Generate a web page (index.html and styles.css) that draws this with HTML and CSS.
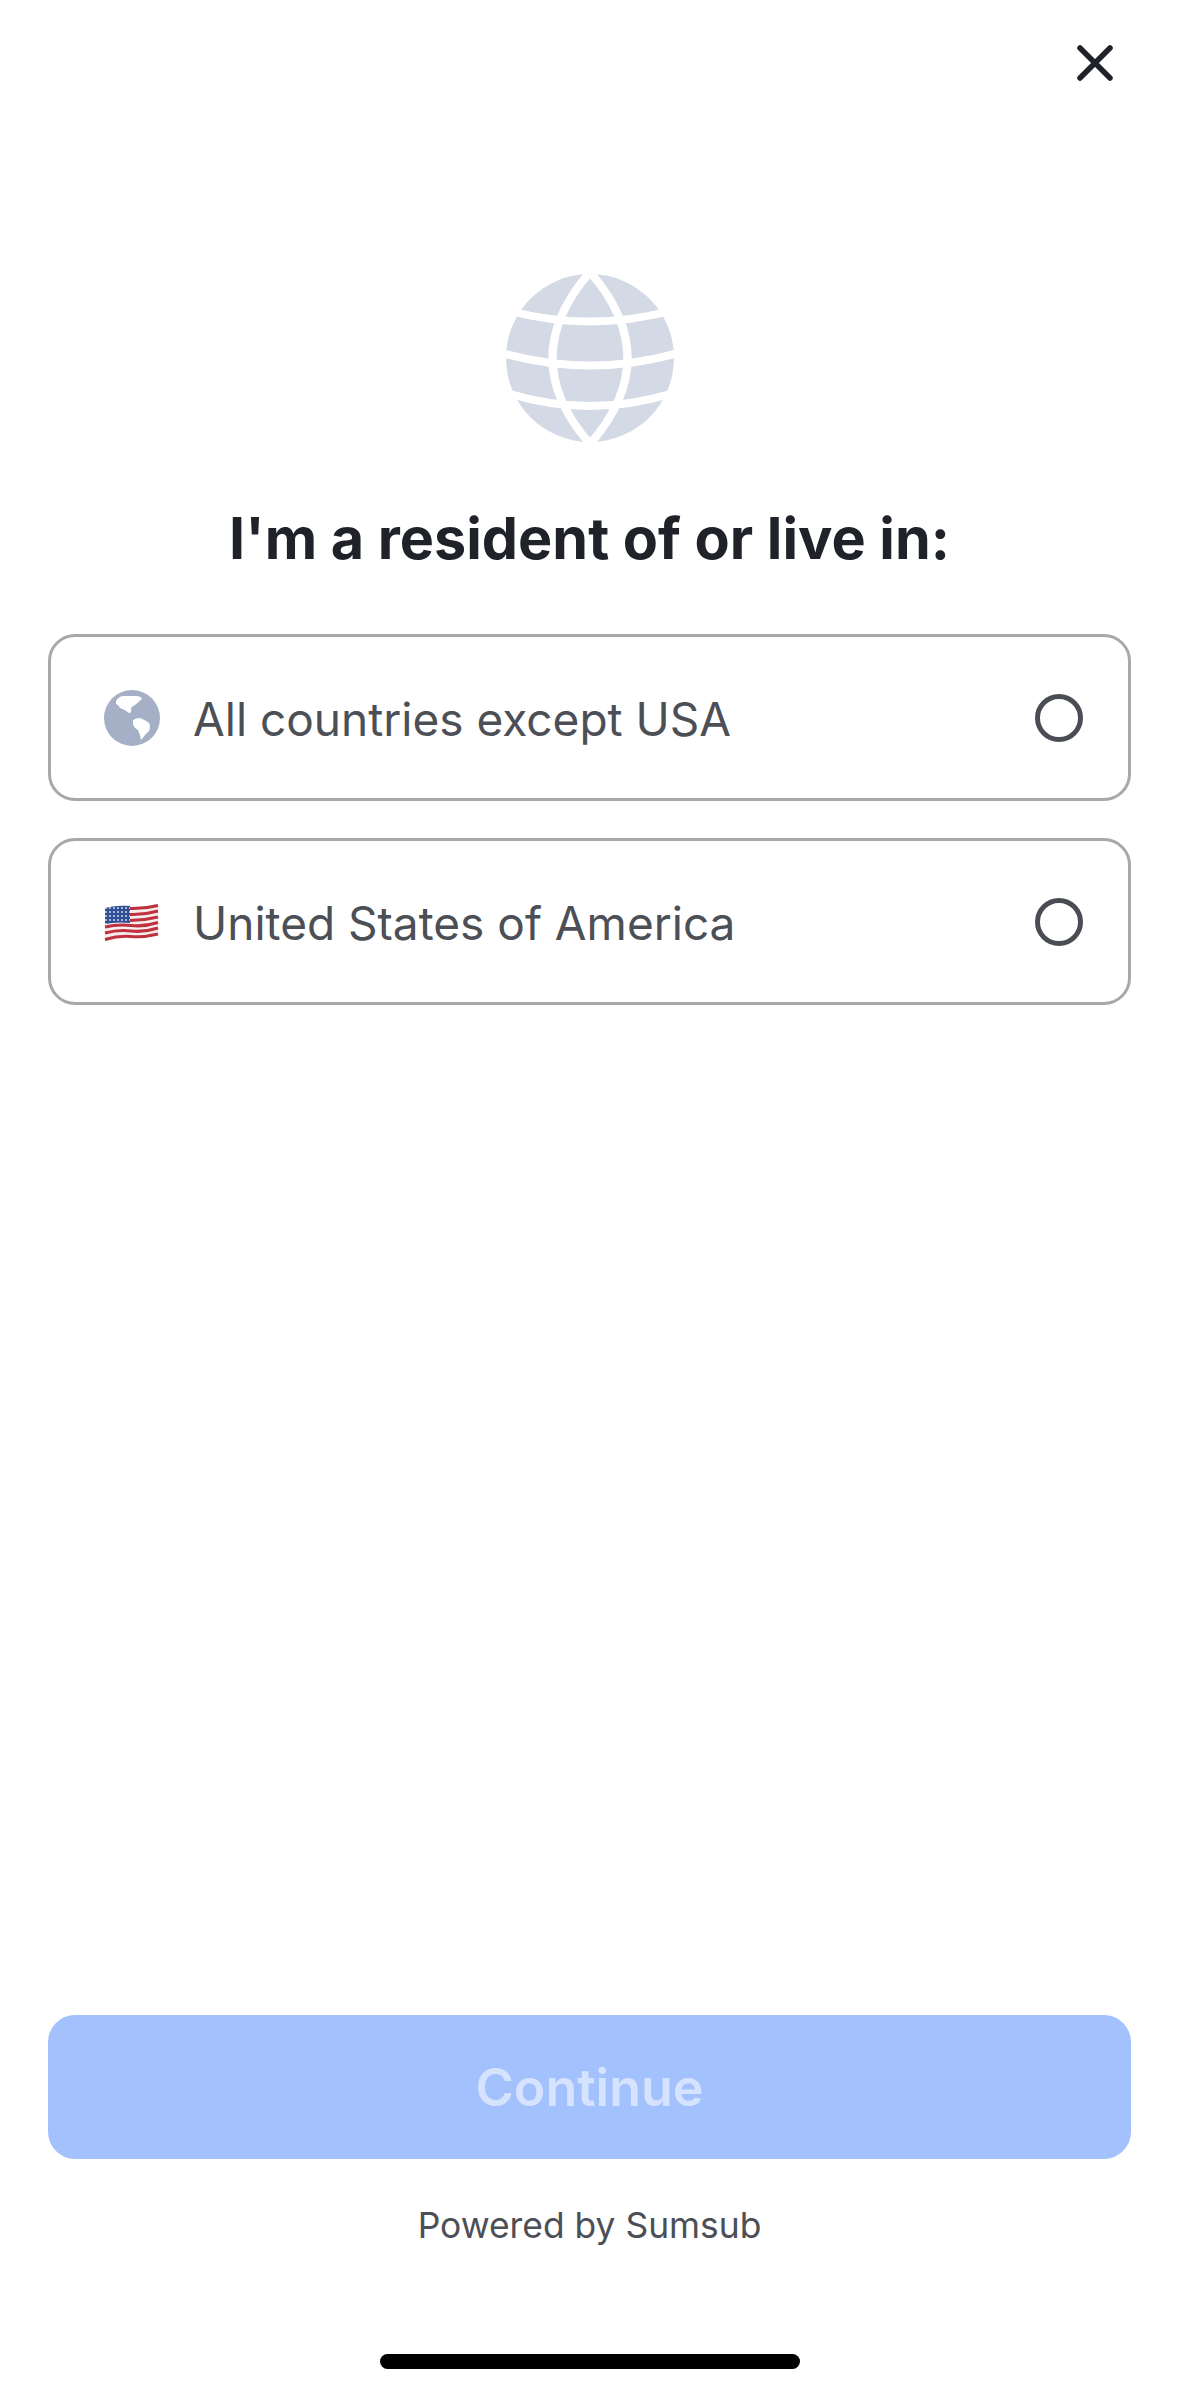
FILE: index.html
```html
<!DOCTYPE html>
<html lang="en">
<head>
<meta charset="UTF-8">
<meta name="viewport" content="width=device-width, initial-scale=1.0">
<title>Country of residence</title>
<link rel="stylesheet" href="styles.css">
</head>
<body>
<div class="page">
    <div class="top-bar">
        <svg class="close-icon" viewBox="0 0 36 36">
            <path d="M3 3L33 33M33 3L3 33"/>
        </svg>
    </div>

    <svg class="hero-globe" viewBox="0 0 168 168">
        <circle class="hero-disc" cx="84" cy="84" r="84"/>
        <path class="hero-lines" d="M84 -2Q9 84 84 170M84 -2Q159 84 84 170M4 37Q84 58 164 37M-4 79Q84 104 172 79M4 120Q84 144 164 120"/>
    </svg>

    <h1>I'm a resident of or live in:</h1>

    <div class="options">
        <div class="option">
            <svg class="option-icon" viewBox="0 0 56 56">
                <circle class="world-disc" cx="28" cy="28" r="28"/>
                <path class="world-land" d="M12 11Q15 6 20 6L33 6Q38 7 38 9L31 15Q27 17 27 19Q28 23 25 23Q22 20 16 18Q15 15 12 14Z"/>
                <path class="world-land" d="M29 30Q32 28 36 28Q43 31 45 33Q47 37 45 41L41 45Q39 48 37 50Q36 44 34 40Q30 38 29 34Z"/>
            </svg>
            <span class="option-label">All countries except USA</span>
            <span class="radio"></span>
        </div>
        <div class="option">
            <svg class="option-icon" viewBox="0 0 56 40">
                <defs>
                    <pattern id="stars" width="4" height="4" patternUnits="userSpaceOnUse">
                        <circle cx="2" cy="2" r="0.9" fill="#dfe6f5"/>
                    </pattern>
                </defs>
                <path fill="#f4eeee" d="M1 6Q14 2 27 4T54 1V34Q41 31 27 34T1 39Z"/>
                <g class="flag-stripes">
                    <path d="M26 6.500Q40 7 54 3.500"/>
                    <path d="M26 12.500Q40 13 54 9"/>
                    <path d="M26 18.500Q40 18.500 54 15"/>
                    <path d="M1 25Q14 22 27 23.500T54 20.500"/>
                    <path d="M1 31Q14 27.500 27 29T54 26"/>
                    <path d="M1 37.500Q14 33.500 27 34.500T54 32"/>
                </g>
                <path fill="#2f4f97" d="M1 6Q13 3 26 4V21Q13 19.500 1 22Z"/>
                <path fill="url(#stars)" d="M1 6Q13 3 26 4V21Q13 19.500 1 22Z"/>
            </svg>
            <span class="option-label">United States of America</span>
            <span class="radio"></span>
        </div>
    </div>

    <div class="spacer"></div>

    <button class="continue-btn" type="button" disabled>Continue</button>
    <div class="powered">Powered by Sumsub</div>
    <div class="home-bar"></div>
</div>
</body>
</html>
```

FILE: styles.css
```css
body {
    margin: 0;
    background-color: #fff;
    font-family: 'Inter', 'Liberation Sans', sans-serif;
}

.page {
    height: 2393px;
    padding: 0 48px;
    box-sizing: border-box;
    display: flex;
    flex-direction: column;
    overflow: hidden;
}

.top-bar {
    display: flex;
    justify-content: flex-end;
    padding: 45px 18px 0 0;
}

.close-icon {
    width: 36px;
    height: 36px;
    display: block;
}

.close-icon path {
    fill: none;
    stroke: #1f2229;
    stroke-width: 5.500px;
    stroke-linecap: round;
}

.hero-globe {
    width: 168px;
    height: 168px;
    margin: 193px auto 0;
    display: block;
    overflow: hidden;
    flex-shrink: 0;
}

.hero-disc {
    fill: #d3d9e5;
}

.hero-lines {
    fill: none;
    stroke: #fff;
    stroke-width: 8px;
}

h1 {
    margin: 61px 0 61px;
    text-align: center;
    font-size: 57.500px;
    line-height: 70px;
    font-weight: 700;
    color: #1f2229;
}

.options {
    display: flex;
    flex-direction: column;
    gap: 37px;
}

.option {
    height: 167px;
    box-sizing: border-box;
    border: 3px solid #a8a8a8;
    border-radius: 27px;
    padding: 0 45px 0 53px;
    display: flex;
    align-items: center;
}

.option-icon {
    width: 56px;
    flex-shrink: 0;
}

.world-disc {
    fill: #a5afc6;
}

.world-land {
    fill: #fff;
}

.flag-stripes path {
    fill: none;
    stroke: #c0303f;
    stroke-width: 3px;
}

.option-label {
    margin: 2px 0 0 33px;
    flex: 1;
    font-size: 46px;
    color: #4c4f56;
}

.radio {
    width: 48px;
    height: 48px;
    box-sizing: border-box;
    border: 5.500px solid #4a4d54;
    border-radius: 50%;
}

.spacer {
    flex: 1;
}

.continue-btn {
    height: 144px;
    border: none;
    border-radius: 27px;
    background-color: #a3c1fd;
    color: #d6e3fe;
    font-family: inherit;
    font-size: 52px;
    font-weight: 600;
}

.powered {
    margin-top: 47px;
    text-align: center;
    font-size: 35.400px;
    line-height: 40px;
    color: #4c4f56;
}

.home-bar {
    width: 420px;
    height: 15px;
    margin: 108px auto 24px;
    border-radius: 8px;
    background-color: #000;
}
```
